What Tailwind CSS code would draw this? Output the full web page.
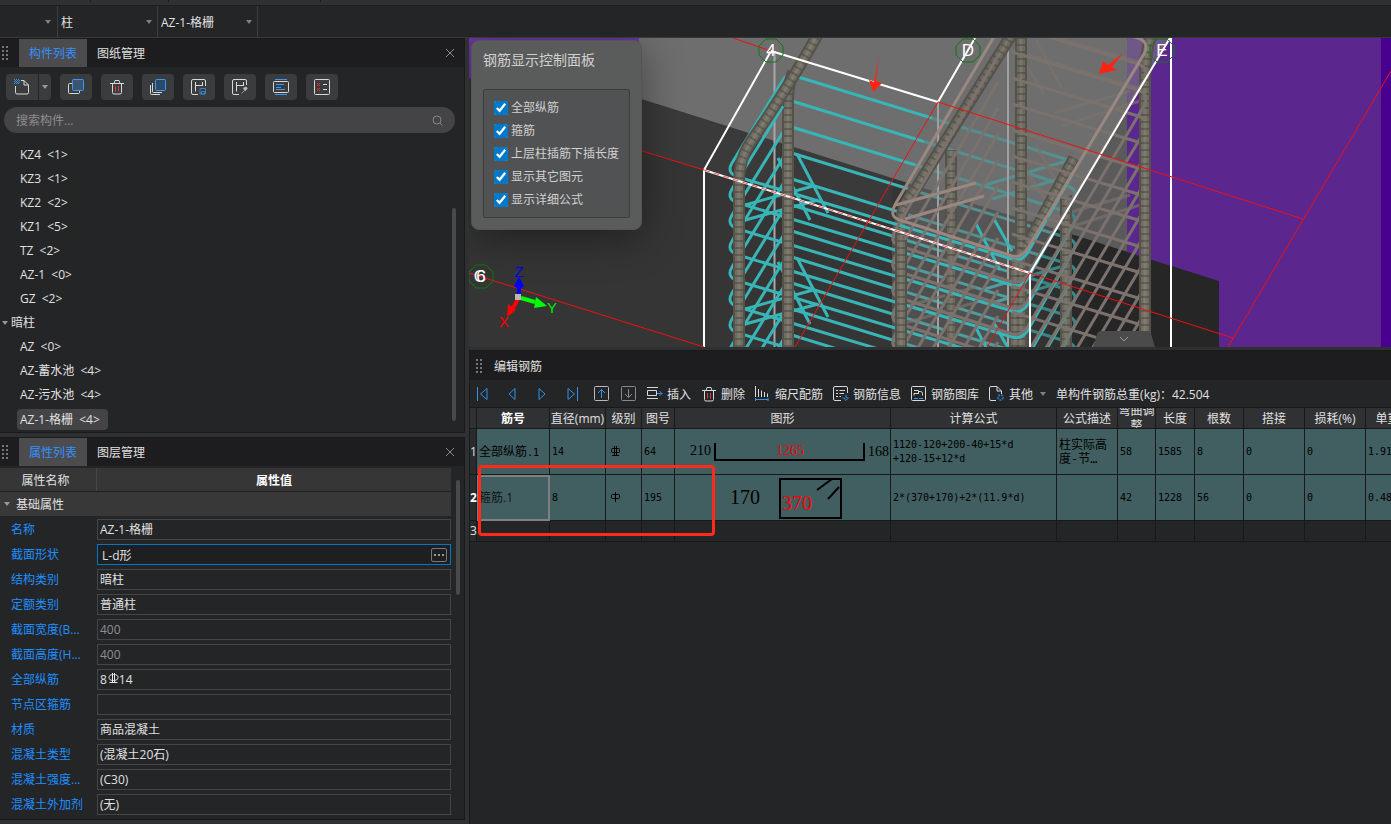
<!DOCTYPE html>
<html lang="zh-CN">
<head>
    <meta charset="UTF-8">
    <meta name="viewport" content="width=device-width, initial-scale=1.0">
    <title>编辑钢筋</title>
    <script src="https://cdn.jsdelivr.net/npm/@tailwindcss/browser@4"></script>
</head>
<body class="h-screen flex flex-col overflow-hidden bg-[#242527] font-['Open_Sans','Noto_Sans_CJK_SC',sans-serif] text-xs text-[#e0e0e0]">
    <svg class="hidden">
        <defs>
            <g id="grip" fill="#77777a">
                <path d="M0 0h2v2H0zM4 0h2v2H4zM0 4h2v2H0zM4 4h2v2H4zM0 8h2v2H0zM4 8h2v2H4zM0 12h2v2H0zM4 12h2v2H4z"/>
            </g>
            <g id="close" stroke="#8a8a8c" fill="none"><path d="M1 1l8 8M9 1l-8 8"/></g>
            <g id="trash" fill="none" stroke="#d8d8d8">
                <path d="M1 4.500h14M5 4.500L6 1.500h4l1 3M3.500 4.500v9a1.500 1.500 0 0 0 1.500 1.500h6a1.500 1.500 0 0 0 1.500-1.500v-9"/>
                <path d="M6.500 7v5.500M9.500 7v5.500" stroke="#e03a3a"/>
            </g>
        </defs>
    </svg>

    <!-- bottom edge of the ribbon -->
    <div class="h-[6px] shrink-0 bg-[#2f3032] border-b border-[#1d1e20] flex">
        <div class="w-[91px] h-[2px] border-r border-[#1b1b1d]"></div>
        <div class="w-[78px] h-[2px] border-r border-[#1b1b1d]"></div>
        <div class="w-[152px] h-[2px] border-r border-[#1b1b1d]"></div>
    </div>

    <div class="h-8 shrink-0 flex border-b border-[#38393b]">
        <div class="relative w-[58px] border-r border-[#3c3d3f]">
            <select aria-label="楼层" class="appearance-none w-full h-full pl-[3px] pt-[2px]"><option></option></select>
            <svg class="absolute right-[6px] top-[14px] pointer-events-none" width="6" height="4"><path d="M0 0h6L3 4z" fill="#808082"/></svg>
        </div>
        <div class="relative w-[100px] border-r border-[#3c3d3f]">
            <select aria-label="构件大类" class="appearance-none w-full h-full pl-[3px] pt-[2px]"><option>柱</option></select>
            <svg class="absolute right-[5px] top-[14px] pointer-events-none" width="6" height="4"><path d="M0 0h6L3 4z" fill="#808082"/></svg>
        </div>
        <div class="relative w-[100px] border-r border-[#3c3d3f]">
            <select aria-label="构件" class="appearance-none w-full h-full pl-[3px] pt-[2px]"><option>AZ-1-格栅</option></select>
            <svg class="absolute right-[5px] top-[14px] pointer-events-none" width="6" height="4"><path d="M0 0h6L3 4z" fill="#808082"/></svg>
        </div>
    </div>

    <div class="flex-1 min-h-0 flex bg-[#2f3032]">
        <aside class="w-[465px] shrink-0 flex flex-col gap-1">
            <!-- component list -->
            <section class="bg-[#242527] border-t border-r border-b border-[#1a1a1c]">
                <div class="h-7 flex items-center bg-[#1d1d1f] pr-[9px]">
                    <svg class="ml-[2px] mr-[11px]" width="6" height="14"><use href="#grip"/></svg>
                    <button class="h-full w-[68px] pt-[2px] bg-[#4c4c4e] text-[#3390ff]">构件列表</button>
                    <button class="h-full w-[68px] pt-[2px]">图纸管理</button>
                    <button class="ml-auto" aria-label="关闭"><svg width="10" height="10"><use href="#close"/></svg></button>
                </div>
                <div class="flex gap-[9px] px-[6px] pt-[7px] pb-[7px]">
                    <div class="flex gap-px">
                        <button aria-label="新建" class="w-8 h-[26px] rounded-l-sm bg-[#3b3c3e] flex items-center justify-center">
                            <svg width="16" height="16" fill="none" stroke="#d8d8d8"><path d="M1.500 7v6.500a1.500 1.500 0 0 0 1.500 1.500h10a1.500 1.500 0 0 0 1.500-1.500V6L10 1.500H7M10 1.500V6h4.500"/><path d="M0 .5h5M0 2.500h5M0 4.500h5" stroke="#3390e8" stroke-dasharray="1 1"/><path d="M1 1.500h5M1 3.500h5" stroke="#3390e8" stroke-dasharray="1 1"/></svg>
                        </button>
                        <button aria-label="更多" class="w-3 h-[26px] rounded-r-sm bg-[#3b3c3e] flex items-center justify-center">
                            <svg width="6" height="4"><path d="M0 0h6L3 4z" fill="#98989a"/></svg>
                        </button>
                    </div>
                    <button aria-label="复制" class="w-8 h-[26px] rounded-sm bg-[#3b3c3e] flex items-center justify-center">
                        <svg width="16" height="16" fill="none"><rect x=".5" y="4.500" width="11" height="10" rx="1" stroke="#d8d8d8"/><rect x="4.500" y=".5" width="11" height="11" rx="1" fill="#3c5470" stroke="#3a98f5"/></svg>
                    </button>
                    <button aria-label="删除" class="w-8 h-[26px] rounded-sm bg-[#3b3c3e] flex items-center justify-center"><svg width="16" height="16"><use href="#trash"/></svg></button>
                    <button aria-label="层间复制" class="w-8 h-[26px] rounded-sm bg-[#3b3c3e] flex items-center justify-center">
                        <svg width="16" height="16" fill="none" stroke="#d8d8d8"><path d="M.5 6v8.500a1 1 0 0 0 1 1H10M2.500 4v8.500a1 1 0 0 0 1 1H12"/><rect x="5.500" y=".5" width="10" height="11" rx="1" fill="#294a6b" stroke="#3a98f5"/></svg>
                    </button>
                    <button aria-label="存档" class="w-8 h-[26px] rounded-sm bg-[#3b3c3e] flex items-center justify-center">
                        <svg width="16" height="16" fill="none" stroke="#d8d8d8"><path d="M7 15.500H2A1.500 1.500 0 0 1 .5 14V2A1.500 1.500 0 0 1 2 .5h11A1.500 1.500 0 0 1 14.500 2v5M4.500 3v9.500M4.500 6.500h7M11.500 3v4"/><path d="M9 9.500h5.500v5.500H9zM10.500 12.500h3V15h-3z" stroke="#3b7ec4"/></svg>
                    </button>
                    <button aria-label="提取" class="w-8 h-[26px] rounded-sm bg-[#3b3c3e] flex items-center justify-center">
                        <svg width="16" height="16" fill="none" stroke="#d8d8d8"><path d="M7 15.500H2A1.500 1.500 0 0 1 .5 14V2A1.500 1.500 0 0 1 2 .5h11A1.500 1.500 0 0 1 14.500 2v4M4.500 3v9.500M4.500 6.500h7M11.500 3v4"/><path d="M9.500 14.500l3-3" stroke="#9a9a9c"/><path d="M11.500 10l3-1.500M12.500 11.500l2.500-3" stroke="#b8b8ba" stroke-width="2"/></svg>
                    </button>
                    <button aria-label="属性" class="w-8 h-[26px] rounded-sm bg-[#3b3c3e] flex items-center justify-center">
                        <svg width="16" height="16" fill="none"><rect x=".5" y="2.500" width="15" height="11" rx="1" stroke="#d8d8d8"/><path d="M2 .5h12M2 15.500h12M3 5.500h8M3 8.500h5M3 10.500h9" stroke="#3a98f5"/></svg>
                    </button>
                    <button aria-label="清理" class="w-8 h-[26px] rounded-sm bg-[#3b3c3e] flex items-center justify-center">
                        <svg width="16" height="16" fill="none"><rect x=".5" y=".5" width="15" height="15" rx="1" stroke="#d8d8d8"/><path d="M9 5.500h4M9 10.500h4" stroke="#d8d8d8"/><path d="M3 4l3 3M6 4L3 7M3 9l3 3M6 9l-3 3" stroke="#f02828"/></svg>
                    </button>
                </div>
                <div class="ml-1 mr-[9px] h-[26px] rounded-full bg-[#444446] flex items-center pl-3 pr-3">
                    <input type="text" aria-label="搜索构件" placeholder="搜索构件..." class="flex-1 pt-[2px] bg-transparent outline-none placeholder:text-[#8d8d8f]">
                    <svg width="11" height="11" fill="none" stroke="#858587"><circle cx="5" cy="5" r="4"/><path d="M8 8l2.500 2.500"/></svg>
                </div>
                <div class="flex justify-between pt-[10px] pr-2 pb-px">
                    <ul class="leading-6">
                        <li class="pl-5">KZ4 <span class="ml-[3px]">&lt;1&gt;</span></li>
                        <li class="pl-5">KZ3 <span class="ml-[3px]">&lt;1&gt;</span></li>
                        <li class="pl-5">KZ2 <span class="ml-[3px]">&lt;2&gt;</span></li>
                        <li class="pl-5">KZ1 <span class="ml-[3px]">&lt;5&gt;</span></li>
                        <li class="pl-5">TZ <span class="ml-[3px]">&lt;2&gt;</span></li>
                        <li class="pl-5">AZ-1 <span class="ml-[3px]">&lt;0&gt;</span></li>
                        <li class="pl-5">GZ <span class="ml-[3px]">&lt;2&gt;</span></li>
                        <li class="pl-[2px] flex items-center gap-[3px]"><svg width="6" height="4"><path d="M0 0h6L3 4z" fill="#98989a"/></svg>暗柱</li>
                        <li class="pl-5">AZ <span class="ml-[3px]">&lt;0&gt;</span></li>
                        <li class="pl-5">AZ-蓄水池 <span class="ml-[3px]">&lt;4&gt;</span></li>
                        <li class="pl-5">AZ-污水池 <span class="ml-[3px]">&lt;4&gt;</span></li>
                        <li class="pl-[17px] flex h-6 items-center"><span class="rounded-sm bg-[#444446] pl-[3px] pr-2 leading-[21px]">AZ-1-格栅 <span class="ml-[3px]">&lt;4&gt;</span></span></li>
                    </ul>
                    <div class="w-1 mt-[65px] mb-[10px] rounded-full bg-[#48494b]"></div>
                </div>
            </section>

            <!-- properties -->
            <section class="flex-1 min-h-0 flex flex-col bg-[#242527] border-t border-r border-b border-[#1a1a1c] mb-1 overflow-hidden">
                <div class="h-7 shrink-0 flex items-center bg-[#1d1d1f] pr-[9px]">
                    <svg class="ml-[2px] mr-[11px]" width="6" height="14"><use href="#grip"/></svg>
                    <button class="h-full w-[68px] pt-[2px] bg-[#4c4c4e] text-[#3390ff]">属性列表</button>
                    <button class="h-full w-[68px] pt-[2px]">图层管理</button>
                    <button class="ml-auto" aria-label="关闭"><svg width="10" height="10"><use href="#close"/></svg></button>
                </div>
                <div class="flex pt-[2px] pr-1 justify-between">
                    <div class="w-[451px]">
                        <div class="flex h-6 items-center bg-[#363636] border-b border-[#1f1f20] text-center leading-[26px]">
                            <div class="w-[97px] pr-[5px] h-full border-r border-[#464646]">属性名称</div>
                            <div class="flex-1 h-full font-bold text-white">属性值</div>
                        </div>
                        <div class="flex h-6 items-center gap-[6px] pl-1 mb-[2px] bg-[#383838]">
                            <svg width="6" height="4"><path d="M0 0h6L3 4z" fill="#98989a"/></svg><span class="pt-[2px]">基础属性</span>
                        </div>
                        <div class="grid grid-cols-[97px_1fr] auto-rows-[21px] gap-y-1 leading-[21px] pt-px">
                            <label for="p1" class="pl-[11px] text-[#1e90ff] whitespace-nowrap">名称</label>
                            <input id="p1" value="AZ-1-格栅" class="w-full h-[21px] border border-[#444547] px-[2px]">
                            <label for="p2" class="pl-[11px] text-[#1e90ff] whitespace-nowrap">截面形状</label>
                            <div class="flex items-center h-[21px] border border-[#0a74c4] bg-[#1e1f21] pl-1 pr-[3px]">
                                <input id="p2" value="L-d形" class="flex-1 h-full bg-transparent outline-none">
                                <button aria-label="选择" class="w-4 h-[14px] rounded-xs border border-[#77777a] flex items-center justify-center"><svg width="10" height="2" fill="#98989a"><path d="M0 0h2v2H0zM4 0h2v2H4zM8 0h2v2H8z"/></svg></button>
                            </div>
                            <label for="p3" class="pl-[11px] text-[#1e90ff] whitespace-nowrap">结构类别</label>
                            <input id="p3" value="暗柱" class="w-full h-[21px] border border-[#444547] px-[2px]">
                            <label for="p4" class="pl-[11px] text-[#1e90ff] whitespace-nowrap">定额类别</label>
                            <input id="p4" value="普通柱" class="w-full h-[21px] border border-[#444547] px-[2px]">
                            <label for="p5" class="pl-[11px] text-[#1e90ff] whitespace-nowrap">截面宽度(B...</label>
                            <input id="p5" value="400" readonly class="w-full h-[21px] border border-[#444547] px-[2px] text-[#8f8f91]">
                            <label for="p6" class="pl-[11px] text-[#1e90ff] whitespace-nowrap">截面高度(H...</label>
                            <input id="p6" value="400" readonly class="w-full h-[21px] border border-[#444547] px-[2px] text-[#8f8f91]">
                            <label for="p7" class="pl-[11px] text-[#1e90ff] whitespace-nowrap">全部纵筋</label>
                            <div class="relative">
                                <input id="p7" value="8&emsp;14" class="w-full h-[21px] border border-[#444547] px-[2px]">
                                <svg class="absolute left-[11px] top-1" width="11" height="11" fill="none" stroke="#e8e8e8"><path d="M4.500 0v10M6.500 0v10M1.500 9.500h8"/><ellipse cx="5.500" cy="4.500" rx="4.500" ry="3"/></svg>
                            </div>
                            <label for="p8" class="pl-[11px] text-[#1e90ff] whitespace-nowrap">节点区箍筋</label>
                            <input id="p8" value="" class="w-full h-[21px] border border-[#444547] px-[2px]">
                            <label for="p9" class="pl-[11px] text-[#1e90ff] whitespace-nowrap">材质</label>
                            <input id="p9" value="商品混凝土" class="w-full h-[21px] border border-[#444547] px-[2px]">
                            <label for="p10" class="pl-[11px] text-[#1e90ff] whitespace-nowrap">混凝土类型</label>
                            <input id="p10" value="(混凝土20石)" class="w-full h-[21px] border border-[#444547] px-[2px]">
                            <label for="p11" class="pl-[11px] text-[#1e90ff] whitespace-nowrap">混凝土强度...</label>
                            <input id="p11" value="(C30)" class="w-full h-[21px] border border-[#444547] px-[2px]">
                            <label for="p12" class="pl-[11px] text-[#1e90ff] whitespace-nowrap">混凝土外加剂</label>
                            <input id="p12" value="(无)" class="w-full h-[21px] border border-[#444547] px-[2px]">
                            <span></span>
                            <input aria-label="泵送类型" class="w-full h-[21px] border border-[#444547] px-[2px]">
                        </div>
                    </div>
                    <div class="w-1 h-[115px] mt-3 rounded-full bg-[#48494b]"></div>
                </div>
            </section>
        </aside>

        <main class="flex-1 min-w-0 ml-1 flex flex-col">
            <!-- 3D view -->
            <div class="relative h-[309px] shrink-0 overflow-hidden">
                <svg class="block w-full h-full" viewBox="469 38 922 309" preserveAspectRatio="xMinYMin slice" fill="none">
                    <defs>
                        <g id="cBack"><path d="M783 80Q787 73 795 76L1065 159Q1078 163 1074 171"/></g>
                        <g id="cFront"><path d="M783 80L732 163Q726 173 738 177L1012 259Q1022 262 1028 252L1074 171"/></g>
                        <g id="cBack4"><use href="#cBack"/><use href="#cBack" y="26"/><use href="#cBack" y="52"/><use href="#cBack" y="78"/></g>
                        <g id="cFront4"><use href="#cFront"/><use href="#cFront" y="26"/><use href="#cFront" y="52"/><use href="#cFront" y="78"/></g>
                        <g id="cHookL"><path d="M778 158l32 62M797 154l31 59M745 205l68-19M738 222l80-22"/></g>
                        <g id="cHookR"><path d="M985 185l85-25M992 199l80-24"/></g>
                        <g id="cHookF"><path d="M976 224l24 46M994 219l18 32"/></g>
                        <g id="bLoop"><path d="M998 30L896 203Q888 217 900 220L1012 256Q1022 258 1028 248L1144 54Q1150 42 1138 38L1012 0"/></g>
                        <g id="bLoop4"><use href="#bLoop"/><use href="#bLoop" y="26"/><use href="#bLoop" y="52"/><use href="#bLoop" y="78"/></g>
                        <g id="bHook"><path d="M896 205l80-22M905 219l79-23M1024 62l20 32M1036 40l26 49M1054 113l76-22M1061 126l82-26"/></g>
                        <g id="barsBack">
                            <path d="M788 347V100Q788 85 793 72"/>
                            <path d="M951 347V150M1021 347V34M1066 347V195"/>
                            <path d="M1015 347V270Q1016 255 1030 240L1074 158"/>
                            <path d="M901 347V225Q901 205 915 190L1012 34"/>
                            <path d="M1145 347V80Q1145 50 1152 34"/>
                        </g>
                        <g id="barsFront">
                            <path d="M739 347V182Q739 160 750 143Q790 85 818 34M901 347V240M788 347V110M1145 347V120"/>
                        </g>
                        <linearGradient id="side" x1="0" x2="1"><stop offset="0" stop-color="#777" stop-opacity=".35"/><stop offset="1" stop-color="#666" stop-opacity=".1"/></linearGradient>
                    </defs>
                    <!-- walls and floor -->
                    <path fill="#353535" d="M469 38h922v309H469z"/>
                    <path fill="#3a3a3a" d="M600 87L892 177V220L704 170 600 138z"/>
                    <path fill="#6e6e6e" d="M600 38h527v214L600 86z"/>
                    <path fill="#6b35a3" d="M469 38h170v40H469z"/>
                    <path fill="#262626" d="M1030 221l189 60v66H1030z"/>
                    <path fill="#5b268d" d="M1127 38h254v309h-162v-66l-92-29z"/>
                    <path fill="#48008f" d="M1381 38h10v309h-10z"/>
                    <path fill="#6f3aa5" d="M1127 38h43l-43 72z"/>
                    <!-- stirrups of the left column, far side -->
                    <path d="M774.500 51V347" stroke="#a8a8a8" stroke-width="2"/>
                    <g stroke="#38b5b7" stroke-width="3">
                        <use href="#cBack4"/><use href="#cBack4" y="104"/><use href="#cBack4" y="208"/>
                        <use href="#cHookR"/><use href="#cHookR" y="104"/>
                    </g>
                    <!-- concrete volume over the right column -->
                    <path fill="#707070" fill-opacity=".55" d="M938 102L975 38H1170L1030 273 892 229z"/>
                    <path fill="#777" fill-opacity=".4" d="M892 229L1030 273V347H892z"/>
                    <path fill="url(#side)" d="M1030 273L1100 155V347H1030z"/>
                    <path fill="#000" fill-opacity=".18" d="M1030 273L1127 110V252L1100 243V347H1030z"/>
                    <path d="M938 102V347M1008 38V347" stroke="#a0a0a0" stroke-width="2"/>
                    <g stroke="#7b726e" stroke-opacity=".7" stroke-width="3">
                        <path d="M1012 50l126 38M1012 24l126 38"/>
                        <use href="#bHook"/><use href="#bHook" y="104"/>
                    </g>
                    <use href="#barsBack" stroke="#55524a" stroke-width="12"/>
                    <use href="#barsBack" stroke="#6b685f" stroke-width="8"/>
                    <use href="#barsBack" stroke="#7a766b" stroke-width="3"/>
                    <use href="#barsBack" stroke="#3c3a33" stroke-opacity=".4" stroke-width="8" stroke-dasharray="2 5"/>
                    <g stroke="#38b5b7" stroke-width="3">
                        <use href="#cFront4"/><use href="#cFront4" y="104"/><use href="#cFront4" y="208"/>
                        <use href="#cHookL"/><use href="#cHookL" y="104"/>
                        <use href="#cHookF"/><use href="#cHookF" y="104"/>
                    </g>
                    <g stroke="#7b726e" stroke-width="3">
                        <use href="#bLoop4" y="26"/><use href="#bLoop4" y="130"/><use href="#bLoop4" y="234"/>
                    </g>
                    <use href="#barsFront" stroke="#55524a" stroke-width="12"/>
                    <use href="#barsFront" stroke="#706d63" stroke-width="8"/>
                    <use href="#barsFront" stroke="#807b70" stroke-width="3"/>
                    <use href="#barsFront" stroke="#3c3a33" stroke-opacity=".4" stroke-width="8" stroke-dasharray="2 5"/>
                    <g stroke="#9a8780" stroke-width="3"><use href="#bLoop"/><path d="M896 205l80-22M905 219l79-23"/></g>
                    <!-- outlines -->
                    <path d="M704 347V170L771 51 938 102 975 38M704 170L1030 273 1170 38M1030 273V347" stroke="#fff" stroke-width="2"/>
                    <path d="M1171 38V347" stroke="#fff" stroke-width="2"/>
                    <g stroke="#f01010">
                        <path d="M733 38l38 13M938 102l365 117M1391 71L1228 347M600 138l104 32M1030 273l203 65M938 102L795 347M469 273l235 74M1030 273l-43 74"/>
                        <path d="M704 170l326 103" stroke-dasharray="6 4" stroke-opacity=".7"/>
                    </g>
                    <!-- axis bubbles -->
                    <g stroke="#0a7d0a">
                        <path id="oct" d="M766 39h10l7 7v9l-7 7h-10l-7-7v-9z"/>
                        <use href="#oct" x="197"/><use href="#oct" x="391"/><use href="#oct" x="-290" y="226"/>
                    </g>
                    <g fill="#fff" font-size="17" text-anchor="middle" font-family="Liberation Sans, sans-serif">
                        <text x="771" y="56">4</text><text x="968" y="56">D</text><text x="1162" y="56">E</text>
                        <text x="481" y="282">6</text><text x="480" y="282">C</text>
                    </g>
                    <!-- xyz gizmo -->
                    <path d="M519 297v-11" stroke="#0000f5" stroke-width="4"/><path d="M519 277l5 9q-5 5-10 0z" fill="#0000f5"/>
                    <path d="M521 298l14 4" stroke="#0f0" stroke-width="4"/><path d="M536 297l11 9-13 2z" fill="#0f0"/>
                    <path d="M518 299l-5 9" stroke="#f00" stroke-width="4"/><path d="M508 304l8 6-9 7z" fill="#f00"/>
                    <path d="M515 294h6v6h-6z" fill="#b8b8b8"/>
                    <g font-size="15" text-anchor="middle" font-family="Liberation Sans, sans-serif">
                        <text x="519" y="277" fill="#0000f5">Z</text><text x="552" y="313" fill="#0e0">Y</text><text x="504" y="327" fill="#f00">X</text>
                    </g>
                    <path fill="#ff2412" d="M879 57l-3 24 6 2-9 9-4-12 5 2zM1123 53l-15 12-5-4-4 13 18-4-5-3z"/>
                </svg>

                <div class="absolute left-[2px] top-[2px] w-[171px] rounded-lg border border-[#545655] bg-[#5a5c5b] pt-[9px] px-[11px] pb-[11px] shadow-[0_8px_40px_rgba(0,0,0,0.4)] text-[#d0d0d0]">
                    <h2 class="text-sm leading-5 mb-[19px]">钢筋显示控制面板</h2>
                    <div class="rounded-xs border border-[#3b3c3d] bg-[#515254] pl-[10px] pr-1 py-[6px]">
                        <label class="flex items-center gap-[3px] h-[23px]"><input type="checkbox" checked class="size-[14px] accent-[#0078cc]">全部纵筋</label>
                        <label class="flex items-center gap-[3px] h-[23px]"><input type="checkbox" checked class="size-[14px] accent-[#0078cc]">箍筋</label>
                        <label class="flex items-center gap-[3px] h-[23px] whitespace-nowrap"><input type="checkbox" checked class="size-[14px] accent-[#0078cc]">上层柱插筋下插长度</label>
                        <label class="flex items-center gap-[3px] h-[23px]"><input type="checkbox" checked class="size-[14px] accent-[#0078cc]">显示其它图元</label>
                        <label class="flex items-center gap-[3px] h-[23px]"><input type="checkbox" checked class="size-[14px] accent-[#0078cc]">显示详细公式</label>
                    </div>
                </div>
                <button aria-label="收起" class="absolute bottom-0 left-[624px]">
                    <svg class="block" width="62" height="16"><path d="M0 16L4 3Q5 0 8 0h46q3 0 4 3l4 13z" fill="#4b4b4b"/><path d="M27 6l4 4 4-4" fill="none" stroke="#9a9a9a"/></svg>
                </button>
            </div>

            <!-- rebar editor -->
            <section class="flex-1 min-h-0 mt-[3px] bg-[#242527] border-t border-l border-[#1a1a1c] overflow-hidden">
                <div class="h-[29px] bg-[#1d1d1f] flex items-center pl-[6px]">
                    <svg class="mr-3" width="6" height="14"><use href="#grip"/></svg>
                    <h2 class="pt-[2px]">编辑钢筋</h2>
                </div>
                <div class="h-[27px] flex items-center whitespace-nowrap">
                    <div class="flex gap-[6px]">
                        <button aria-label="首行" class="w-6 flex justify-center"><svg width="11" height="14" fill="none" stroke="#3390e8"><path d="M.5 0v14M10 1.500v11L3.500 7z"/></svg></button>
                        <button aria-label="上一行" class="w-6 flex justify-center"><svg width="8" height="14" fill="none" stroke="#3390e8"><path d="M7 1.500v11L1 7z"/></svg></button>
                        <button aria-label="下一行" class="w-6 flex justify-center"><svg width="8" height="14" fill="none" stroke="#3390e8"><path d="M1 1.500v11L7 7z"/></svg></button>
                        <button aria-label="末行" class="w-6 flex justify-center"><svg width="11" height="14" fill="none" stroke="#3390e8"><path d="M10.500 0v14M1 1.500v11L7.500 7z"/></svg></button>
                    </div>
                    <div class="flex ml-1">
                        <button aria-label="上移" class="w-[27px] flex justify-center"><svg width="15" height="15" fill="none"><rect x=".5" y=".5" width="14" height="14" rx="1" stroke="#b8b8ba"/><path d="M7.500 12V3.500M4 7l3.500-3.500L11 7" stroke="#3390e8"/></svg></button>
                        <button aria-label="下移" class="w-[27px] flex justify-center"><svg width="15" height="15" fill="none"><rect x=".5" y=".5" width="14" height="14" rx="1" stroke="#8a8a8c"/><path d="M7.500 3v8.500M4 8l3.500 3.500L11 8" stroke="#8a8a8c"/></svg></button>
                    </div>
                    <div class="flex gap-[10px] ml-[5px] [&_span]:pt-[2px]">
                        <button class="flex items-center gap-1"><svg width="16" height="16" fill="none" stroke="#d8d8d8"><path d="M0 1.500h11M0 12.500h11M.5 4.500h9v5h-9z"/><path d="M10 7.500h5M12.500 5l2.500 2.500-2.500 2.500" stroke="#3390e8"/></svg><span>插入</span></button>
                        <button class="flex items-center gap-1"><svg width="16" height="16"><use href="#trash"/></svg><span>删除</span></button>
                        <button class="flex items-center gap-1"><svg width="16" height="16" fill="none" stroke="#d8d8d8"><path d="M.5 0v11M3.500 3v8M6.500 4.500v6.500M9.500 6v5M12.500 7.500v3.500"/><path d="M0 13.500h13.500M.5 12v3M13 12v3" stroke="#3390e8"/></svg><span>缩尺配筋</span></button>
                        <button class="flex items-center gap-1"><svg width="16" height="16" fill="none" stroke="#d8d8d8"><path d="M8 14.500H2A1.500 1.500 0 0 1 .5 13V2A1.500 1.500 0 0 1 2 .5h11A1.500 1.500 0 0 1 14.500 2v5M3 4.500h2M6.500 4.500H12M3 7.500h2M6.500 7.500H11M3 10.500h2M6.500 10.500H8"/><path d="M13 8.500v3l2.500.5-3 2.500-1-2.500H9.500" stroke="#3b82cc"/></svg><span>钢筋信息</span></button>
                        <button class="flex items-center gap-1"><svg width="16" height="16" fill="none" stroke="#d8d8d8"><rect x=".5" y=".5" width="14" height="14" rx="1"/><path d="M3 4.500h4.500v3M3 9.500V7.500h5M7.500 5.500h2q2 0 2 2v2"/><path d="M3 12.500h4M8 12.500h4" stroke="#3390e8"/></svg><span>钢筋图库</span></button>
                        <button class="flex items-center gap-1"><svg width="16" height="16" fill="none" stroke="#d8d8d8"><path d="M7 14.500H2A1.500 1.500 0 0 1 .5 13V2A1.500 1.500 0 0 1 2 .5h6L12.500 5v3M8 .5V5h4.500"/><circle cx="11.500" cy="11.500" r="2.500" stroke="#2c6cae" stroke-width="2" stroke-dasharray="2 1"/></svg><span>其他</span><svg class="ml-[3px]" width="6" height="4"><path d="M0 0h6L3 4z" fill="#808082"/></svg></button>
                    </div>
                    <span class="ml-[10px] pt-[2px]">单构件钢筋总重(kg)：42.504</span>
                </div>
                <div class="relative border-t border-[#19191b]">
                    <table class="w-[960px] table-fixed border-separate border-spacing-0 text-left [&_td]:border-r [&_td]:border-b [&_td]:border-[#19191b] [&_th]:border-r [&_th]:border-b [&_th]:border-[#19191b]">
                        <colgroup>
                            <col class="w-[7px]"><col class="w-[73px]"><col class="w-[56px]"><col class="w-[36px]"><col class="w-[33px]"><col class="w-[216px]"><col class="w-[166px]"><col class="w-[61px]"><col class="w-[38px]"><col class="w-[39px]"><col class="w-[49px]"><col class="w-[61px]"><col class="w-[61px]"><col class="w-[64px]">
                        </colgroup>
                        <thead>
                            <tr class="h-[21px] bg-[#303133] text-center whitespace-nowrap leading-[18px] [&_th]:font-normal [&_th]:pt-[2px]">
                                <th></th>
                                <th><b class="text-white">筋号</b></th>
                                <th>直径(mm)</th>
                                <th>级别</th>
                                <th>图号</th>
                                <th>图形</th>
                                <th>计算公式</th>
                                <th>公式描述</th>
                                <th class="pt-0!"><div class="h-5 flex items-center overflow-hidden whitespace-normal leading-[15px]">弯曲调整</div></th>
                                <th>长度</th>
                                <th>根数</th>
                                <th>搭接</th>
                                <th>损耗(%)</th>
                                <th>单重(kg)</th>
                            </tr>
                        </thead>
                        <tbody class="font-['DejaVu_Sans_Mono','Noto_Sans_CJK_SC',monospace] text-[10px] text-black">
                            <tr class="h-[46px] bg-[#415f60] [&_td]:pl-[2px]">
                                <td class="bg-[#2a2b2d] pl-0! text-xs text-[#e0e0e0] font-['Open_Sans',sans-serif]">1</td>
                                <td class="whitespace-nowrap"><span class="text-xs">全部纵筋</span>.1</td>
                                <td>14</td>
                                <td><svg class="ml-[3px]" width="10" height="11" fill="none" stroke="#000"><path d="M3.500 0v10M5.500 0v10M1 9.500h7"/><rect x=".5" y="2.500" width="8" height="4" rx="1"/></svg></td>
                                <td>64</td>
                                <td class="p-0!">
                                    <svg class="block" width="215" height="45" fill="none" font-family="Liberation Serif, serif" font-size="14">
                                        <path d="M40 14v17h149V14" stroke="#000" stroke-width="2"/>
                                        <text x="15" y="26" fill="#000">210</text><text x="101" y="26" fill="#f00">1265</text><text x="193" y="27" fill="#000">168</text>
                                    </svg>
                                </td>
                                <td class="leading-[14px]">1120-120+200-40+15*d<br>+120-15+12*d</td>
                                <td class="text-xs leading-[14px]">柱实际高度-节…</td>
                                <td>58</td>
                                <td>1585</td>
                                <td>8</td>
                                <td>0</td>
                                <td>0</td>
                                <td>1.918</td>
                            </tr>
                            <tr class="h-[46px] bg-[#415f60] [&_td]:pl-[2px]">
                                <td class="bg-[#2a2b2d] pl-0! text-xs font-bold text-white font-['Open_Sans',sans-serif]">2</td>
                                <td class="outline-2 -outline-offset-2 outline-[#7f8080] text-xs font-['Open_Sans','Noto_Sans_CJK_SC',sans-serif] text-[#101414]">箍筋.1</td>
                                <td>8</td>
                                <td><svg class="ml-[3px]" width="10" height="11" fill="none" stroke="#000"><path d="M4.500 0v10"/><rect x=".5" y="2.500" width="8" height="4" rx="1"/></svg></td>
                                <td>195</td>
                                <td class="p-0!">
                                    <svg class="block" width="215" height="45" fill="none" font-family="Liberation Serif, serif" font-size="20">
                                        <rect x="105" y="4" width="61" height="39" stroke="#000" stroke-width="2"/>
                                        <path d="M142 15l15-11M153 24l11-12" stroke="#000" stroke-width="2"/>
                                        <text x="55" y="29" fill="#000">170</text><text x="107" y="35" fill="#f00">370</text>
                                    </svg>
                                </td>
                                <td>2*(370+170)+2*(11.9*d)</td>
                                <td></td>
                                <td>42</td>
                                <td>1228</td>
                                <td>56</td>
                                <td>0</td>
                                <td>0</td>
                                <td>0.485</td>
                            </tr>
                            <tr class="h-[21px]">
                                <td class="bg-[#2a2b2d] text-xs text-[#e0e0e0] font-['Open_Sans',sans-serif]">3</td>
                                <td></td><td></td><td></td><td></td><td></td><td></td><td></td><td></td><td></td><td></td><td></td><td></td><td></td>
                            </tr>
                        </tbody>
                    </table>
                    <!-- highlight frame -->
                    <div class="absolute left-2 top-[57px] w-[237px] h-[71px] rounded-sm border-3 border-[#ff2a1c] pointer-events-none"></div>
                </div>
            </section>
        </main>
    </div>
</body>
</html>
